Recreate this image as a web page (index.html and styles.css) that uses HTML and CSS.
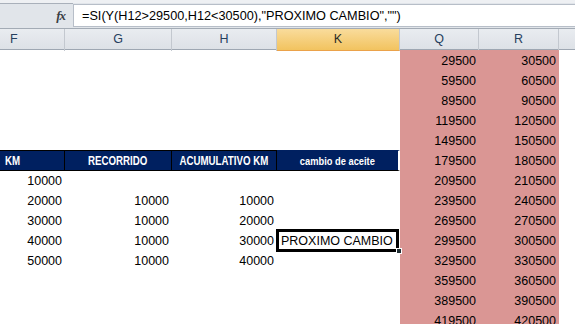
FILE: index.html
```html
<!DOCTYPE html>
<html lang="es">
<head>
  <meta charset="UTF-8">
  <title>Cambio de aceite</title>
  <link rel="stylesheet" href="styles.css">
</head>
<body>
  <div class="excel">
    <div class="formula-bar">
      <div class="fx-zone"><span class="fx">fx</span></div>
      <div class="formula">=SI(Y(H12&gt;29500,H12&lt;30500),"PROXIMO CAMBIO","")</div>
    </div>

    <div class="col-heads">
      <div class="ch ch-f">F</div>
      <div class="ch">G</div>
      <div class="ch">H</div>
      <div class="ch ch-sel">K</div>
      <div class="ch">Q</div>
      <div class="ch">R</div>
      <div class="ch ch-last"></div>
    </div>

    <div class="sheet">
      <div class="row"><div class="c"></div><div class="c"></div><div class="c"></div><div class="c"></div><div class="c pink">29500</div><div class="c pink">30500</div><div class="c"></div></div>
      <div class="row"><div class="c"></div><div class="c"></div><div class="c"></div><div class="c"></div><div class="c pink">59500</div><div class="c pink">60500</div><div class="c"></div></div>
      <div class="row"><div class="c"></div><div class="c"></div><div class="c"></div><div class="c"></div><div class="c pink">89500</div><div class="c pink">90500</div><div class="c"></div></div>
      <div class="row"><div class="c"></div><div class="c"></div><div class="c"></div><div class="c"></div><div class="c pink">119500</div><div class="c pink">120500</div><div class="c"></div></div>
      <div class="row"><div class="c"></div><div class="c"></div><div class="c"></div><div class="c"></div><div class="c pink">149500</div><div class="c pink">150500</div><div class="c"></div></div>
      <div class="row head-row">
        <div class="c th th-left"><span class="narrow">KM</span></div>
        <div class="c th"><span class="narrow">RECORRIDO</span></div>
        <div class="c th"><span class="narrow">ACUMULATIVO KM</span></div>
        <div class="c th th-plain"><span class="narrow">cambio de aceite</span></div>
        <div class="c pink">179500</div><div class="c pink">180500</div><div class="c"></div>
      </div>
      <div class="row"><div class="c">10000</div><div class="c"></div><div class="c"></div><div class="c"></div><div class="c pink">209500</div><div class="c pink">210500</div><div class="c"></div></div>
      <div class="row"><div class="c">20000</div><div class="c">10000</div><div class="c">10000</div><div class="c"></div><div class="c pink">239500</div><div class="c pink">240500</div><div class="c"></div></div>
      <div class="row"><div class="c">30000</div><div class="c">10000</div><div class="c">20000</div><div class="c"></div><div class="c pink">269500</div><div class="c pink">270500</div><div class="c"></div></div>
      <div class="row"><div class="c">40000</div><div class="c">10000</div><div class="c">30000</div><div class="c text selected">PROXIMO CAMBIO<span class="handle"></span></div><div class="c pink">299500</div><div class="c pink">300500</div><div class="c"></div></div>
      <div class="row"><div class="c">50000</div><div class="c">10000</div><div class="c">40000</div><div class="c"></div><div class="c pink">329500</div><div class="c pink">330500</div><div class="c"></div></div>
      <div class="row"><div class="c"></div><div class="c"></div><div class="c"></div><div class="c"></div><div class="c pink">359500</div><div class="c pink">360500</div><div class="c"></div></div>
      <div class="row"><div class="c"></div><div class="c"></div><div class="c"></div><div class="c"></div><div class="c pink">389500</div><div class="c pink">390500</div><div class="c"></div></div>
      <div class="row"><div class="c"></div><div class="c"></div><div class="c"></div><div class="c"></div><div class="c pink">419500</div><div class="c pink">420500</div><div class="c"></div></div>
    </div>
  </div>
</body>
</html>
```

FILE: styles.css
```css
* {
  margin: 0;
  padding: 0;
  box-sizing: border-box;
}
body {
  font-family: 'Liberation Sans', Arial, sans-serif;
  background: #fff;
  overflow: hidden;
}
.excel {
  width: 575px;
  height: 324px;
  overflow: hidden;
}
/* formula bar */
.formula-bar {
  height: 29px;
  display: flex;
  background: #e1e5ea;
  border-top: 3px solid #eef0f3;
  border-bottom: 1px solid #a3abb5;
}
.fx-zone {
  width: 73px;
  display: flex;
  justify-content: flex-end;
  align-items: center;
  padding-right: 8px;
  border-top: 1px solid #a9b0ba;
}
.fx {
  font-family: 'Liberation Serif', serif;
  font-style: italic;
  font-weight: bold;
  font-size: 13px;
  color: #3b3f45;
  letter-spacing: -1px;
}
.formula {
  flex: 1;
  margin-top: 1px;
  margin-bottom: 1px;
  background: #fff;
  border: 1px solid #b7bec8;
  border-right: none;
  font-size: 12.7px;
  line-height: 22px;
  padding-left: 8px;
  color: #000;
}
/* column headers */
.col-heads {
  display: grid;
  grid-template-columns: 65px 107px 105px 123px 79px 80px 16px;
  height: 21px;
  background: linear-gradient(#e9ecf0, #dde1e6);
  border-bottom: 1px solid #9ea7b2;
}
.ch {
  border-right: 1px solid #c3c8cf;
  text-align: center;
  font-size: 12.5px;
  line-height: 21px;
  color: #26405e;
}
.ch-f {
  text-align: left;
  padding-left: 10px;
}
.ch-sel {
  background: linear-gradient(#f9dc9c, #f2c35f);
  border-bottom: 1px solid #eba24a;
  color: #2b2a26;
}
.ch-last {
  border-right: none;
}
/* cells */
.sheet {
  display: flex;
  flex-direction: column;
}
.row {
  display: grid;
  grid-template-columns: 65px 107px 105px 123px 79px 80px 16px;
  height: 20px;
}
.c {
  position: relative;
  font-size: 12.5px;
  line-height: 17px;
  padding-top: 3px;
  padding-right: 3px;
  text-align: right;
  color: #000;
  white-space: nowrap;
}
.pink {
  background: #da9694;
}
.text {
  text-align: left;
  padding-left: 4px;
}
.selected::after {
  content: '';
  position: absolute;
  left: -1px;
  top: -1px;
  right: 1px;
  bottom: -2px;
  border: 3px solid #000;
}
.handle {
  position: absolute;
  right: -2px;
  bottom: -4px;
  width: 6px;
  height: 6px;
  background: #1f2e33;
  border: 1px solid #fff;
  z-index: 1;
}
/* navy header row */
.head-row .th {
  display: flex;
  justify-content: center;
  background: #002060;
  color: #fff;
  font-weight: bold;
  font-size: 12px;
  padding: 2px 0 0;
  border-top: 1px solid #000;
  border-bottom: 1px solid #000;
  border-right: 1px solid #000;
}
.narrow {
  display: inline-block;
  transform: scaleX(0.81);
}
.head-row .th-left {
  justify-content: flex-start;
  padding-left: 5px;
}
.head-row .th-left .narrow {
  transform-origin: left center;
}
.head-row .th-plain {
  font-size: 11.5px;
  border-right: 2px solid #fff;
  border-top-color: #002060;
}
```
